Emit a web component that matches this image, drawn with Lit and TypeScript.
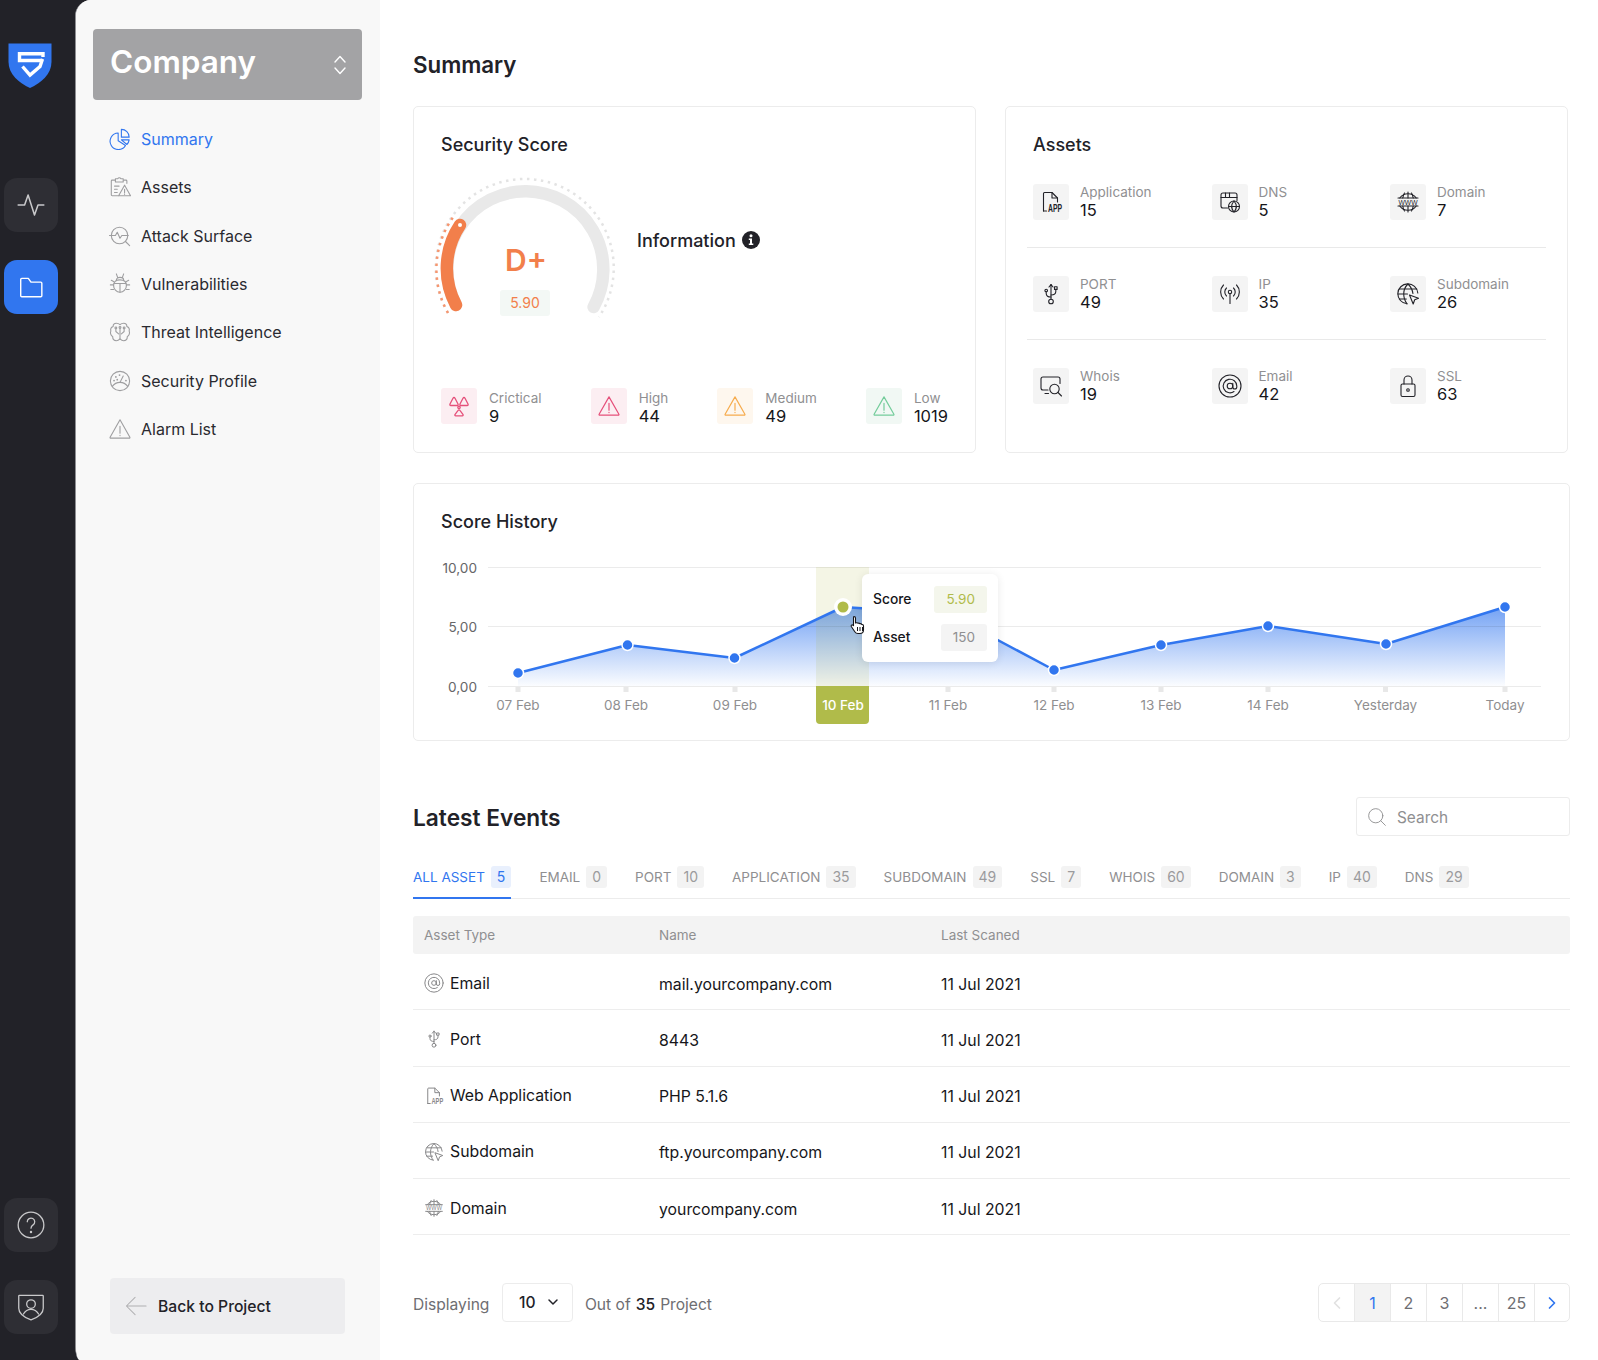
import { LitElement, html, css, svg } from "lit";
import { customElement } from "lit/decorators.js";

const P: Record<string, any> = {
  pulse: svg`<path d="M1 12h5.500l3-8.500 5.500 17 3-8.500H23"/>`,
  folder: svg`<path d="M2.500 20V5a1 1 0 0 1 1-1h6l2.500 3.500h9a1 1 0 0 1 1 1V20a1 1 0 0 1-1 1h-17.500a1 1 0 0 1-1-1z"/>`,
  help: svg`<circle cx="12" cy="12" r="11"/><path d="M8.800 9.200a3.200 3.200 0 1 1 5 2.700c-1.200.8-1.800 1.400-1.800 2.800"/><circle cx="12" cy="18" r=".5"/>`,
  shield: svg`<path d="M2 2h20a.5.500 0 0 1 .5.500V13c0 5-5 8-10.500 10C6.500 21 1.500 18 1.500 13V2.500A.5.500 0 0 1 2 2z"/><circle cx="12" cy="9.500" r="3.700"/><path d="M5.500 18c1.500-2.500 3.800-4 6.500-4s5 1.500 6.500 4"/>`,
  summary: svg`<path d="M10 5.500a9 9 0 1 0 8 13.500l-8-5z"/><path d="M13.500 1.500a8.500 8.500 0 0 1 8.500 8.500h-8.500z"/><path d="M13.500 13H22a9 9 0 0 1-2.500 5z"/>`,
  assets: svg`<path d="M10 21.500H3.500a1 1 0 0 1-1-1V5.500a1 1 0 0 1 1-1H7M16 4.500h2.500a1 1 0 0 1 1 1V8"/><path d="M7 3h2.500a2 2 0 0 1 3.500 0H15.500v3.500H7z"/><path d="M6 11h5M6 14.500h3M6 18h3"/><path d="M17 10l6.500 11.500h-13z"/><path d="M17 14.500v3.500M17 19.500v.5"/>`,
  attack: svg`<circle cx="11.500" cy="11.500" r="9"/><path d="M18 18l4.500 4.500"/><path d="M.5 11.500H7l2-3.500 3 6.500 2-3h7"/>`,
  bug: svg`<path d="M5 13.500C5 9.500 8 7.500 12 7.500s7 2 7 6-3 7.500-7 7.500-7-3.500-7-7.500z"/><path d="M8 7.800c0-2 1.800-3 4-3s4 1 4 3"/><path d="M5.500 11.500h13M12 11.500V21M8 1l1.500 4M16 1l-1.500 4"/><path d="M5 13H1.500M5 18H2M19 13h3.500M19 18h3M5.500 9.500L2.500 8M18.500 9.500l3-1.500"/>`,
  threat: svg`<path d="M8 2.500c-3 0-3.500 2.500-3.500 3.500-2 .8-3 3-2.500 5-1 2 0 5 2 6 0 2 1 4.500 4 4.500 2 0 3-1 4-2 1 1 2 2 4 2 3 0 4-2.500 4-4.500 2-1 3-4 2-6 .5-2-.5-4.200-2.500-5 0-1-.5-3.500-3.500-3.500-1.500 0-3 .5-4 1.500-1-1-2.500-1.500-4-1.500z"/><path d="M12 8v12M7.500 8.500v3l3 2.500M16.500 8.500v3l-3 2.500"/><circle cx="7.500" cy="7.500" r="1"/><circle cx="16.500" cy="7.500" r="1"/><circle cx="12" cy="7" r="1"/>`,
  profile: svg`<circle cx="12" cy="12" r="10.500"/><path d="M3.500 18c2-2.800 5-4.500 8.500-4.500s6.500 1.700 8.500 4.500"/><path d="M12 13.500l3.500-7"/><path d="M5.500 11.500v.01M7.500 7.500v.01M11.500 5.500v.01M18.500 11.500v.01M9 10.500v.01" stroke-width="2"/>`,
  warn: svg`<path d="M12 2L22.800 21a.7.700 0 0 1-.6 1H1.800a.7.700 0 0 1-.6-1z"/><path d="M12 9v7.500M12 18.800v.4"/>`,
  radiation: svg`<path d="M7 3.500c.5 0 .8.4 1 .8L11 10c.4.8 0 1.500-.9 1.500H3.900c-.9 0-1.300-.7-.9-1.500L6 4.300c.2-.4.500-.8 1-.8z"/><path d="M17 3.500c.5 0 .8.4 1 .8L21 10c.4.8 0 1.500-.9 1.500H13.900c-.9 0-1.300-.7-.9-1.500L16 4.300c.2-.4.500-.8 1-.8z"/><path d="M12 15.800c.4 0 .7.3.9.6l3 4c.5.7.2 1.400-.7 1.400H8.800c-.9 0-1.200-.7-.7-1.400l3-4c.2-.3.500-.6.900-.6z"/><circle cx="12" cy="13.300" r="1.200"/>`,
  app: svg`<path d="M4.500 21V3.500a1 1 0 0 1 1-1H13l5.500 5.500v4"/><path d="M13 2.500V8h5.500"/><path d="M4.500 21H7.500"/><text class="ict big" transform="translate(9 21.800) scale(.62 1)">APP</text>`,
  dns: svg`<path d="M9.500 18H5a2 2 0 0 1-2-2V5a2 2 0 0 1 2-2h12a2 2 0 0 1 2 2v5.500"/><path d="M3 7.500h16M7.500 3v4.500M11.500 3v4.500"/><circle cx="16" cy="16.500" r="5.500"/><path d="M10.500 16.500h11M16 11c-3 3.500-3 7.500 0 11M16 11c3 3.500 3 7.500 0 11"/>`,
  domain: svg`<path d="M3.800 8a10 10 0 0 1 16.400 0M3.800 16a10 10 0 0 0 16.400 0"/><path d="M12 2v6M12 16v6M8.500 3C7.500 4.500 7 6 6.800 8M15.500 3c1 1.500 1.500 3 1.700 5M8.500 21c-1-1.500-1.500-3-1.700-5M15.500 21c1-1.500 1.500-3 1.700-5"/><path d="M2 8h20M2 16h20"/><text class="ict" x="12" y="14.900" text-anchor="middle" textLength="19" lengthAdjust="spacingAndGlyphs">WWW</text>`,
  port: svg`<path d="M12 2.500V17"/><path d="M10 5l2-2.500L14 5"/><circle cx="12" cy="19.500" r="2.300"/><path d="M12 15c-3 0-4.800-1-4.800-3.500V9.800"/><circle cx="7.200" cy="8.500" r="1.300"/><path d="M12 13c3 0 4.800-1 4.800-3.500V7.500"/><rect x="15.500" y="4.800" width="2.600" height="2.600"/>`,
  ip: svg`<circle cx="12" cy="10" r="1.700"/><path d="M12 11.700V21.500"/><path d="M8.500 6a5.500 5.500 0 0 0 0 8M15.500 6a5.500 5.500 0 0 1 0 8M5.500 3a10 10 0 0 0 0 14M18.500 3a10 10 0 0 1 0 14"/>`,
  subdomain: svg`<path d="M21.800 11A10 10 0 1 0 11 21.800"/><path d="M2 12h9.500M3.300 7h17.400M3.300 17h7M12 2c-5.500 5-5.500 14-1 19.800M12 2c3 3 4.500 6 4.900 9.500"/><path d="M13.500 13l9 3.200-3.800 1.600-1.500 4.200z"/>`,
  whois: svg`<path d="M21 9.500V5a2 2 0 0 0-2-2H4a2 2 0 0 0-2 2v9a2 2 0 0 0 2 2h5"/><path d="M6 19.500h3.500"/><circle cx="15.500" cy="15" r="4.700"/><path d="M19 18.500l3.500 3.500"/>`,
  email: svg`<circle cx="12" cy="12" r="11"/><circle cx="12" cy="12" r="2.800"/><path d="M14.800 9.200v3.800a2 2 0 0 0 4 0V12a6.800 6.800 0 1 0-2.800 5.500"/>`,
  ssl: svg`<rect x="5" y="10" width="14" height="12.500" rx="1.500"/><path d="M8 10V6a4 4 0 0 1 8 0v4"/><circle cx="12" cy="16" r="1.300"/>`,
  search: svg`<circle cx="10.500" cy="10.500" r="8.500"/><path d="M16.500 16.500l5.500 5.500"/>`,
  back: svg`<path d="M23 12H2M11 2.500L1.500 12l9.500 9.500"/>`,
};

const ic = (name: string, size: number, sw = 1.3) =>
  html`<svg class="ic" width=${size} height=${size} viewBox="0 0 24 24" fill="none" stroke="currentColor" stroke-width=${sw} stroke-linecap="round" stroke-linejoin="round">${P[name]}</svg>`;

const NAV: [string, string][] = [
  ["summary", "Summary"], ["assets", "Assets"], ["attack", "Attack Surface"], ["bug", "Vulnerabilities"],
  ["threat", "Threat Intelligence"], ["profile", "Security Profile"], ["warn", "Alarm List"],
];
const SEV = [
  ["radiation", "Crictical", "9", "crit"], ["warn", "High", "44", "crit"],
  ["warn", "Medium", "49", "med"], ["warn", "Low", "1019", "low"],
];
const ASSETS = [
  [["app", "Application", "15"], ["dns", "DNS", "5"], ["domain", "Domain", "7"]],
  [["port", "PORT", "49"], ["ip", "IP", "35"], ["subdomain", "Subdomain", "26"]],
  [["whois", "Whois", "19"], ["email", "Email", "42"], ["ssl", "SSL", "63"]],
];
const TABS: [string, string][] = [
  ["ALL ASSET", "5"], ["EMAIL", "0"], ["PORT", "10"], ["APPLICATION", "35"], ["SUBDOMAIN", "49"],
  ["SSL", "7"], ["WHOIS", "60"], ["DOMAIN", "3"], ["IP", "40"], ["DNS", "29"],
];
const ROWS = [
  ["email", "Email", "mail.yourcompany.com"], ["port", "Port", "8443"], ["app", "Web Application", "PHP 5.1.6"],
  ["subdomain", "Subdomain", "ftp.yourcompany.com"], ["domain", "Domain", "yourcompany.com"],
];
const PTS: [number, number, number, string][] = [
  [518, 673, 518, "07 Feb"], [627.5, 645, 626, "08 Feb"], [734.5, 658, 735, "09 Feb"], [843, 607, 843, "10 Feb"],
  [949, 614, 948, "11 Feb"], [1054, 670, 1054, "12 Feb"], [1161, 645, 1161, "13 Feb"], [1268, 626, 1268, "14 Feb"],
  [1386, 644, 1385.5, "Yesterday"], [1505, 607, 1505, "Today"],
];

@customElement("app-root")
export class AppRoot extends LitElement {
  static styles = css`
    :host { display: block; font-family: Inter, "Noto Sans", sans-serif; color: #222228; }
    * { box-sizing: border-box; }
    .root { display: flex; width: 1598px; height: 1360px; overflow: hidden; background: #222228; }
    .rail { width: 75px; flex: none; display: flex; flex-direction: column; padding: 43px 0 26px 4px; color: #c9c9cb; }
    .logo { margin: 0 0 89px 4px; display: block; }
    .rbtn { width: 54px; height: 54px; border-radius: 13px; background: #2e2e34; display: flex; align-items: center; justify-content: center; margin-bottom: 28px; }
    .rbtn.on { background: #3176ef; color: #fff; }
    .spacer { flex: 1; }
    .rbtn.last { margin-bottom: 0; }
    .panel { flex: 1; display: flex; background: #fff; border-left: 1px solid #8e8e92; border-radius: 16px 0 0 5px / 16px 0 0 14px; overflow: hidden; }
    .side { width: 304px; flex: none; background: #f8f8f8; padding: 29px 18px 26px 17px; display: flex; flex-direction: column; }
    .select { height: 71px; background: #a3a3a5; border-radius: 4px; display: flex; align-items: center; justify-content: space-between; padding: 0 15px 0 17px; color: #fff; font-size: 31.500px; font-weight: 600; }
    .select span { margin-top: -6px; }
    .nav { margin-top: 15px; display: flex; flex-direction: column; }
    .nav a { height: 48.300px; display: flex; align-items: center; gap: 10px; padding-left: 16px; font-size: 16px; color: #2a2a30; }
    .nav a .ic { color: #9e9ea0; }
    .nav a.on, .nav a.on .ic { color: #3176ef; }
    .back { margin: auto 0 0 17px; width: 235px; height: 56px; background: #ededef; border-radius: 4px; display: flex; align-items: center; gap: 11px; padding-left: 15px; font-size: 15.700px; font-weight: 500; }
    .back .ic { color: #b0b0b2; }
    .main { flex: 1; padding: 49px 28px 0 33px; min-width: 0; }
    h1, h2 { margin: 0; line-height: 32px; font-weight: 600; color: #222228; }
    h1 { font-size: 22.300px; }
    h2 { font-size: 22.700px; margin-top: 2px; }
    .top { margin-top: 25px; display: grid; grid-template-columns: 563px 563px; column-gap: 29px; }
    .card { border: 1px solid #ececec; border-radius: 5px; background: #fff; }
    .ctitle { font-size: 18px; font-weight: 500; line-height: 24px; }
    .score { height: 347px; padding: 26px 27px 26px; display: flex; flex-direction: column; }
    .grow { display: flex; margin: 15px 0 0 -11px; }
    .grow svg { display: block; }
    .gt { font-family: Inter, sans-serif; }
    .grade { font-size: 30px; font-weight: 600; fill: #f27f4b; }
    .gnum { font-size: 14px; fill: #f27f4b; }
    .info { display: flex; align-items: center; gap: 6px; font-size: 18px; font-weight: 500; margin: 55px 0 0 17px; height: 26px; }
    .sev { margin-top: auto; display: flex; justify-content: space-between; }
    .sevi { display: flex; gap: 12px; }
    .sbox { width: 36px; height: 36px; border-radius: 3px; display: flex; align-items: center; justify-content: center; flex: none; }
    .sbox.crit { background: #fceef2; color: #e5507a; }
    .sbox.med { background: #fef7ee; color: #f6ac4e; }
    .sbox.low { background: #f1f8f4; color: #74cc9b; }
    .stext { padding-top: 1px; }
    .lbl { font-size: 13.500px; line-height: 18px; color: #909092; }
    .val { font-size: 16.500px; line-height: 19px; color: #16161a; }
    .assets { height: 347px; padding: 26px 21px 0 21px; }
    .assets .ctitle { padding-left: 6px; }
    .arow { display: grid; grid-template-columns: 178.500px 178.500px 1fr; padding: 0 0 27px 6px; border-bottom: 1px solid #e9e9e9; margin-top: 28px; }
    .ctitle + .arow { margin-top: 27px; }
    .arow:last-child { border-bottom: 0; }
    .acell { display: flex; gap: 11px; height: 36px; }
    .acell .stext { padding: 0; margin-top: -1px; }
    .abox { width: 36px; height: 36px; border-radius: 3px; background: #f4f4f4; display: flex; align-items: center; justify-content: center; color: #222228; flex: none; }
    .chartcard { margin-top: 30px; width: 1157px; height: 258px; position: relative; }
    .chartcard .ctitle { padding: 26px 27px 0; }
    .chartwrap { position: absolute; left: 0; top: 64px; width: 1155px; height: 191px; }
    .plot { display: block; position: absolute; left: 0; top: 0; }
    .axis { font-size: 13.500px; fill: #8f8f91; }
    .ylab { font-size: 13.600px; fill: #666668; }
    .pilltxt { font-size: 13.500px; font-weight: 500; fill: #fff; }
    .tip { position: absolute; left: 448px; top: 26px; width: 136px; height: 88px; background: #fff; border-radius: 6px; box-shadow: 0 1px 8px rgba(0,0,0,.09); display: flex; flex-direction: column; justify-content: center; gap: 11px; padding: 0 11px; font-size: 13.800px; font-weight: 500; color: #16161a; }
    .tip div { display: flex; justify-content: space-between; align-items: center; }
    .tip span { height: 27px; line-height: 27px; padding: 0 12px; border-radius: 3px; font-weight: 400; font-size: 13.500px; }
    .tip .s { background: #f4f6ec; color: #b0bb4a; }
    .tip .a { background: #f4f4f4; color: #8f8f91; }
    .hand { position: absolute; left: 436px; top: 67px; }
    .ehead { margin-top: 56px; display: flex; justify-content: space-between; align-items: center; height: 39px; }
    .search { width: 214px; height: 39px; border: 1px solid #ececec; border-radius: 3px; display: flex; align-items: center; gap: 10px; padding-left: 10px; font-size: 15.400px; color: #8f8f91; }
    .search span { margin-top: 2px; }
    .tabs { margin-top: 30px; display: flex; gap: 28px; border-bottom: 1px solid #ececec; height: 33px; }
    .tab { height: 33px; padding-bottom: 9px; border-bottom: 2px solid transparent; display: flex; align-items: center; gap: 6px; font-size: 13.500px; color: #8f8f91; }
    .tab b { font-weight: 400; font-size: 14px; min-width: 20px; height: 22px; line-height: 21px; padding: 0 6px; border-radius: 3px; background: #f3f3f3; color: #9b9b9d; text-align: center; }
    .tab.on { color: #3176ef; border-bottom-color: #3176ef; }
    .tab.on b { background: #e9f0fd; color: #3176ef; }
    .thead, .trow { display: grid; grid-template-columns: 246px 282px 1fr; align-items: center; }
    .thead { margin-top: 17px; height: 38px; background: #f3f3f3; border-radius: 3px; font-size: 13.500px; color: #8f8f91; }
    .trow { height: 56.250px; padding-top: 5px; border-bottom: 1px solid #ededed; font-size: 15.800px; color: #16161a; }
    .thead > div:first-child { padding-left: 11px; }
    .tname { display: flex; align-items: center; gap: 6px; padding-left: 11px; margin-top: -2px; }
    .tname .ic { color: #88888a; }
    .foot { margin-top: 48px; display: flex; align-items: center; justify-content: space-between; height: 39px; }
    .fl { display: flex; align-items: center; font-size: 15.600px; color: #6e6e72; padding-top: 4px; }
    .pick { width: 71px; height: 39px; margin: -4px 12px 0 12.500px; padding: 0 0 1px 16px; border: 1px solid #ececec; border-radius: 4px; display: flex; align-items: center; gap: 12px; color: #222228; font-weight: 500; }
    .fl strong { font-weight: 500; color: #222228; margin: 0 5px; }
    .pages { display: flex; height: 39px; border: 1px solid #e9e9e9; border-radius: 5px; overflow: hidden; font-size: 16px; color: #6e6e72; }
    .pages > div { width: 36px; border-right: 1px solid #e9e9e9; display: flex; align-items: center; justify-content: center; }
    .pages > div:last-child { border-right: 0; width: 34px; }
    .pages .cur { background: #f3f3f3; color: #3176ef; }
    .pages .dim { color: #e2e2e2; }
    .pages .act { color: #3176ef; }
    .ict { font: 500 8px "Liberation Sans", sans-serif; fill: currentColor; stroke: none; }
    .ict.big { font-size: 11px; font-weight: 700; }
  `;

  private gauge() {
    return html`<svg width="190" height="160" viewBox="0 0 190 160" fill="none">
      <path d="M18 141A89 89 0 1 1 169 145" stroke="#e3e3e3" stroke-width="2.500" stroke-dasharray="2.500 4.500"/>
      <path d="M18 141A89 89 0 0 1 24 44" stroke="#f6966f" stroke-width="2.500" stroke-dasharray="2.500 4.500"/>
      <path d="M26 133A78 78 0 1 1 163.600 135" stroke="#e9e9e9" stroke-width="12.500" stroke-linecap="round"/>
      <path d="M26 133A78 78 0 0 1 30 53" stroke="#f27f4b" stroke-width="12.500" stroke-linecap="round"/>
      <circle cx="30" cy="53" r="2" fill="#fff"/>
      <text class="gt grade" x="96" y="99" text-anchor="middle">D+</text>
      <rect x="70" y="118" width="50" height="26" rx="3" fill="#f3f8f5"/>
      <text class="gt gnum" x="95" y="136" text-anchor="middle">5.90</text>
    </svg>`;
  }

  private chart() {
    const line = PTS.map((p) => `${p[0]},${p[1]}`).join(" ");
    const area = `518,686 ${line} 1505,686`;
    return html`<div class="chartwrap">
      <svg class="plot" width="1155" height="191" viewBox="414 548 1155 191" fill="none">
        <defs><linearGradient id="ag" x1="0" y1="607" x2="0" y2="686" gradientUnits="userSpaceOnUse">
          <stop offset="0" stop-color="#3176ef" stop-opacity=".68"/>
          <stop offset="1" stop-color="#3176ef" stop-opacity=".02"/>
        </linearGradient></defs>
        <polygon points=${area} fill="url(#ag)"/>
        ${[567, 626, 686].map((y) => svg`<line x1="488" x2="1541" y1=${y + 0.5} y2=${y + 0.5} stroke="#000" stroke-opacity=".08"/>`)}
        ${[["10,00", 567], ["5,00", 626], ["0,00", 686]].map((l) => svg`<text class="gt ylab" x="477" y=${(l[1] as number) + 5.5} text-anchor="end">${l[0]}</text>`)}
        <rect x="816" y="567" width="53" height="119" fill="#b0bb4a" opacity=".14"/>
        <path d="M816 686h53v34a4 4 0 0 1-4 4h-45a4 4 0 0 1-4-4z" fill="#b0bb4a"/>
        ${PTS.filter((p) => p[3] !== "10 Feb").map((p) => svg`<rect x=${p[2] - 2.5} y="687" width="5" height="5" fill="#e8e8e8"/>`)}
        <polyline points=${line} stroke="#3176ef" stroke-width="2.500" stroke-linejoin="round"/>
        ${PTS.filter((p) => p[3] !== "10 Feb").map((p) => svg`<circle cx=${p[0]} cy=${p[1]} r="5.500" fill="#3176ef" stroke="#fff" stroke-width="1.500"/>`)}
        <circle cx="843" cy="607" r="9" fill="#fff"/><circle cx="843" cy="607" r="5.500" fill="#b0bb4a"/>
        ${PTS.map((p) => svg`<text class=${p[3] === "10 Feb" ? "gt pilltxt" : "gt axis"} x=${p[2]} y="709.500" text-anchor="middle">${p[3]}</text>`)}
      </svg>
      <div class="tip">
        <div>Score<span class="s">5.90</span></div>
        <div>Asset<span class="a">150</span></div>
      </div>
      <svg class="hand" width="17" height="20" viewBox="0 0 17 20">
        <path d="M4 1.500c1 0 1.500.5 1.500 1.500v5l1-.3c.8-.1 1.300.2 1.500.6.700-.3 1.500-.1 1.800.5.800-.3 1.600 0 2 .7.800-.2 1.700.3 1.700 1.500v4c0 2-1.200 3.500-3.500 3.500H8c-1.500 0-2.500-.7-3.200-1.800L1.300 11.500c-.6-1 .6-2.200 1.700-1.300l.5.500V3c0-1 .5-1.500.5-1.500z" fill="#fff" stroke="#16161a" stroke-width="1.100" stroke-linejoin="round"/>
        <path d="M7.500 12v4M10 12v4M12.500 12v4" stroke="#16161a" stroke-width="1"/>
      </svg>
    </div>`;
  }

  render() {
    return html`<div class="root">
      <div class="rail">
        <svg class="logo" width="44" height="46" viewBox="8 43 44 46">
          <path d="M8.500 43.500H51.500V62C51.500 74 41 83 30 88 19 83 8.500 74 8.500 62Z" fill="#3176ef"/>
          <path d="M43 57V53.800H19.500V60.500H42.500" fill="none" stroke="#fff" stroke-width="3.400"/>
          <path d="M22.500 66.500L30 75 40 66.500 42.500 59" fill="none" stroke="#fff" stroke-width="3.400"/>
        </svg>
        <div class="rbtn">${ic("pulse", 28, 1.300)}</div>
        <div class="rbtn on">${ic("folder", 26, 1.300)}</div>
        <div class="spacer"></div>
        <div class="rbtn">${ic("help", 28, 1.100)}</div>
        <div class="rbtn last">${ic("shield", 28, 1.100)}</div>
      </div>
      <div class="panel">
        <aside class="side">
          <div class="select"><span>Company</span>
            <svg width="14" height="20" viewBox="0 0 14 20" fill="none" stroke="#fff" stroke-width="1.400" stroke-linecap="round" stroke-linejoin="round"><path d="M2 7l5-5.500L12 7M2 13l5 5.500L12 13"/></svg>
          </div>
          <nav class="nav">
            ${NAV.map((n, i) => html`<a class=${i === 0 ? "on" : ""}>${ic(n[0], 22, 1.200)}<span>${n[1]}</span></a>`)}
          </nav>
          <div class="back">${ic("back", 22, 1.100)}Back to Project</div>
        </aside>
        <main class="main">
          <h1>Summary</h1>
          <div class="top">
            <section class="card score">
              <div class="ctitle">Security Score</div>
              <div class="grow">
                ${this.gauge()}
                <div class="info">Information
                  <svg width="18" height="18" viewBox="0 0 18 18"><circle cx="9" cy="9" r="9" fill="#222228"/><circle cx="9" cy="4.800" r="1.500" fill="#fff"/><path d="M6.800 7.500H10V12.500H11.300V14H6.800V12.500H8V9H6.800Z" fill="#fff"/></svg>
                </div>
              </div>
              <div class="sev">
                ${SEV.map((s) => html`<div class="sevi"><div class="sbox ${s[3]}">${ic(s[0], s[0] === "radiation" ? 24 : 22, 1.300)}</div><div class="stext"><div class="lbl">${s[1]}</div><div class="val">${s[2]}</div></div></div>`)}
              </div>
            </section>
            <section class="card assets">
              <div class="ctitle">Assets</div>
              ${ASSETS.map((r) => html`<div class="arow">${r.map((a) => html`<div class="acell"><div class="abox">${ic(a[0], 24, 1.100)}</div><div class="stext"><div class="lbl">${a[1]}</div><div class="val">${a[2]}</div></div></div>`)}</div>`)}
            </section>
          </div>
          <section class="card chartcard">
            <div class="ctitle">Score History</div>
            ${this.chart()}
          </section>
          <div class="ehead">
            <h2>Latest Events</h2>
            <div class="search">${ic("search", 20, 1.100)}<span>Search</span></div>
          </div>
          <div class="tabs">
            ${TABS.map((t, i) => html`<div class="tab ${i === 0 ? "on" : ""}">${t[0]}<b>${t[1]}</b></div>`)}
          </div>
          <div class="thead"><div>Asset Type</div><div>Name</div><div>Last Scaned</div></div>
          ${ROWS.map((r) => html`<div class="trow"><div class="tname">${ic(r[0], 20, 1.200)}${r[1]}</div><div>${r[2]}</div><div>11 Jul 2021</div></div>`)}
          <div class="foot">
            <div class="fl">Displaying
              <div class="pick">10
                <svg width="12" height="8" viewBox="0 0 12 8" fill="none" stroke="#222228" stroke-width="1.500" stroke-linecap="round" stroke-linejoin="round"><path d="M2 2l4 4 4-4"/></svg>
              </div>
              Out of <strong>35</strong> Project
            </div>
            <div class="pages">
              <div class="dim"><svg width="10" height="14" viewBox="0 0 10 14" fill="none" stroke="currentColor" stroke-width="1.700" stroke-linecap="round" stroke-linejoin="round"><path d="M7.500 2L2.500 7l5 5"/></svg></div>
              <div class="cur">1</div><div>2</div><div>3</div><div>...</div><div>25</div>
              <div class="act"><svg width="10" height="14" viewBox="0 0 10 14" fill="none" stroke="currentColor" stroke-width="1.700" stroke-linecap="round" stroke-linejoin="round"><path d="M2.500 2l5 5-5 5"/></svg></div>
            </div>
          </div>
        </main>
      </div>
    </div>`;
  }
}
